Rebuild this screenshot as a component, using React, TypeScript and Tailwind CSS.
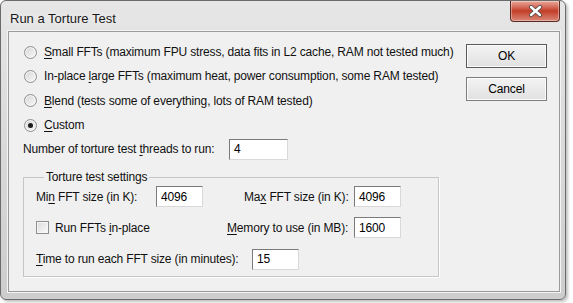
import type { ReactNode } from "react";

const UI = "font-['Liberation_Sans',Arial,sans-serif]";

function Mn({ children }: { children: ReactNode }) {
  return <span className="underline decoration-1 underline-offset-[2px]">{children}</span>;
}

function Radio({ checked }: { checked?: boolean }) {
  return (
    <span className="flex h-[13px] w-[13px] shrink-0 items-center justify-center rounded-full border border-[#8e8f8f] bg-gradient-to-br from-[#d4d4d4] to-[#fbfbfb] shadow-[inset_0_0_0_1px_#f6f6f6]">
      {checked && <span className="h-[5px] w-[5px] rounded-full bg-[#1c1c1c]" />}
    </span>
  );
}

function Field({ value, w }: { value: string; w: string }) {
  return (
    <div
      className={`flex h-[21px] shrink-0 items-center border-t border-l border-t-[#7a7a7a] border-l-[#7a7a7a] border-r border-b border-r-[#d9d9d9] border-b-[#d9d9d9] bg-white pl-[4px] text-[12px] text-black ${w}`}
    >
      {value}
    </div>
  );
}

function Button({ label, primary }: { label: string; primary?: boolean }) {
  return (
    <button
      className={`flex h-[24px] w-[81px] items-center justify-center border bg-gradient-to-b from-[#f3f3f3] to-[#e1e1e1] text-[12px] text-black shadow-[inset_0_0_0_1px_#fcfcfc] ${
        primary ? "border-[#5a5a5a]" : "border-[#7d7d7d]"
      }`}
    >
      {label}
    </button>
  );
}

const radios: { label: ReactNode; checked?: boolean }[] = [
  {
    label: (
      <>
        <Mn>S</Mn>mall FFTs (maximum FPU stress, data fits in L2 cache, RAM not tested much)
      </>
    ),
  },
  {
    label: (
      <>
        In-place <Mn>l</Mn>arge FFTs (maximum heat, power consumption, some RAM tested)
      </>
    ),
  },
  {
    label: (
      <>
        <Mn>B</Mn>lend (tests some of everything, lots of RAM tested)
      </>
    ),
  },
  {
    label: (
      <>
        <Mn>C</Mn>ustom
      </>
    ),
    checked: true,
  },
];

export default function App() {
  return (
    <div className={`h-[303px] w-[573px] overflow-hidden bg-white ${UI}`}>
      {/* window frame */}
      <div className="flex h-[300px] w-[566px] flex-col rounded-[6px] border border-[#6b6b6b] bg-gradient-to-b from-[#e6e6e6] via-[#d9d9d9] to-[#cdcdcd] shadow-[2px_2px_3px_rgba(0,0,0,0.25)]">
        <div className="flex h-[30px] shrink-0 items-start justify-between pl-[9px] pr-[5px]">
          <span className="mt-[8px] text-[13px] text-[#1a1a1a] [text-shadow:0_0_6px_#ffffff]">Run a Torture Test</span>
          <div className="flex h-[21px] w-[50px] items-center justify-center rounded-b-[4px] border border-t-0 border-[#5b2a23] bg-gradient-to-b from-[#e9a99c] via-[#c23c28] to-[#d98676] shadow-[inset_0_0_0_1px_rgba(255,255,255,0.35)]">
            <svg width="15" height="12" viewBox="0 0 15 12">
              <path d="M3 2 L12 10 M12 2 L3 10" stroke="#4a4a4a" strokeWidth="4" strokeLinecap="round" />
              <path d="M3 2 L12 10 M12 2 L3 10" stroke="#ffffff" strokeWidth="2.4" strokeLinecap="round" />
            </svg>
          </div>
        </div>

        {/* client area */}
        <div className="ml-[7px] flex h-[261px] w-[552px] border border-[#9a9a9a] bg-[#f0f0f0] text-[12px] tracking-[-0.16px] text-[#111] shadow-[0_0_0_1px_#f4f4f4]">
          <div className="flex w-[457px] flex-col pt-[8px] pl-[14px]">
            {radios.map((r, i) => (
              <div key={i} className="flex h-[24.3px] items-center gap-[7px] pl-[1px]">
                <Radio checked={r.checked} />
                <span>{r.label}</span>
              </div>
            ))}
            <div className="mt-[1px] flex h-[22px] items-center">
              <span className="w-[206px]">
                Number of torture test <Mn>t</Mn>hreads to run:
              </span>
              <Field value="4" w="w-[59px]" />
            </div>

            <fieldset className="mt-[10px] w-[416px] border border-[#c5c5c5] pt-[2px] pb-[6px] pl-[12px] shadow-[1px_1px_0_#ffffff]">
              <legend className="ml-[8px] px-[2px] leading-[14px]">Torture test settings</legend>
              <div className="flex flex-col gap-[10px]">
                <div className="flex h-[21px] items-center">
                  <span className="w-[120px]">
                    Mi<Mn>n</Mn> FFT size (in K):
                  </span>
                  <Field value="4096" w="w-[47px]" />
                  <span className="ml-[41px] w-[110px]">
                    Ma<Mn>x</Mn> FFT size (in K):
                  </span>
                  <Field value="4096" w="w-[47px]" />
                </div>
                <div className="flex h-[21px] items-center">
                  <span className="h-[13px] w-[13px] border border-[#8e8f8f] bg-gradient-to-br from-[#dadada] to-[#fbfbfb] shadow-[inset_0_0_0_1px_#f6f6f6]" />
                  <span className="ml-[6px] w-[172px]">
                    Run FFTs <Mn>i</Mn>n-place
                  </span>
                  <span className="w-[127px]">
                    <Mn>M</Mn>emory to use (in MB):
                  </span>
                  <Field value="1600" w="w-[47px]" />
                </div>
                <div className="flex h-[22px] items-center">
                  <span className="w-[216px]">
                    <Mn>T</Mn>ime to run each FFT size (in minutes):
                  </span>
                  <Field value="15" w="w-[47px]" />
                </div>
              </div>
            </fieldset>
          </div>

          <div className="flex flex-col gap-[9px] pt-[12px]">
            <Button label="OK" primary />
            <Button label="Cancel" />
          </div>
        </div>
      </div>
    </div>
  );
}
